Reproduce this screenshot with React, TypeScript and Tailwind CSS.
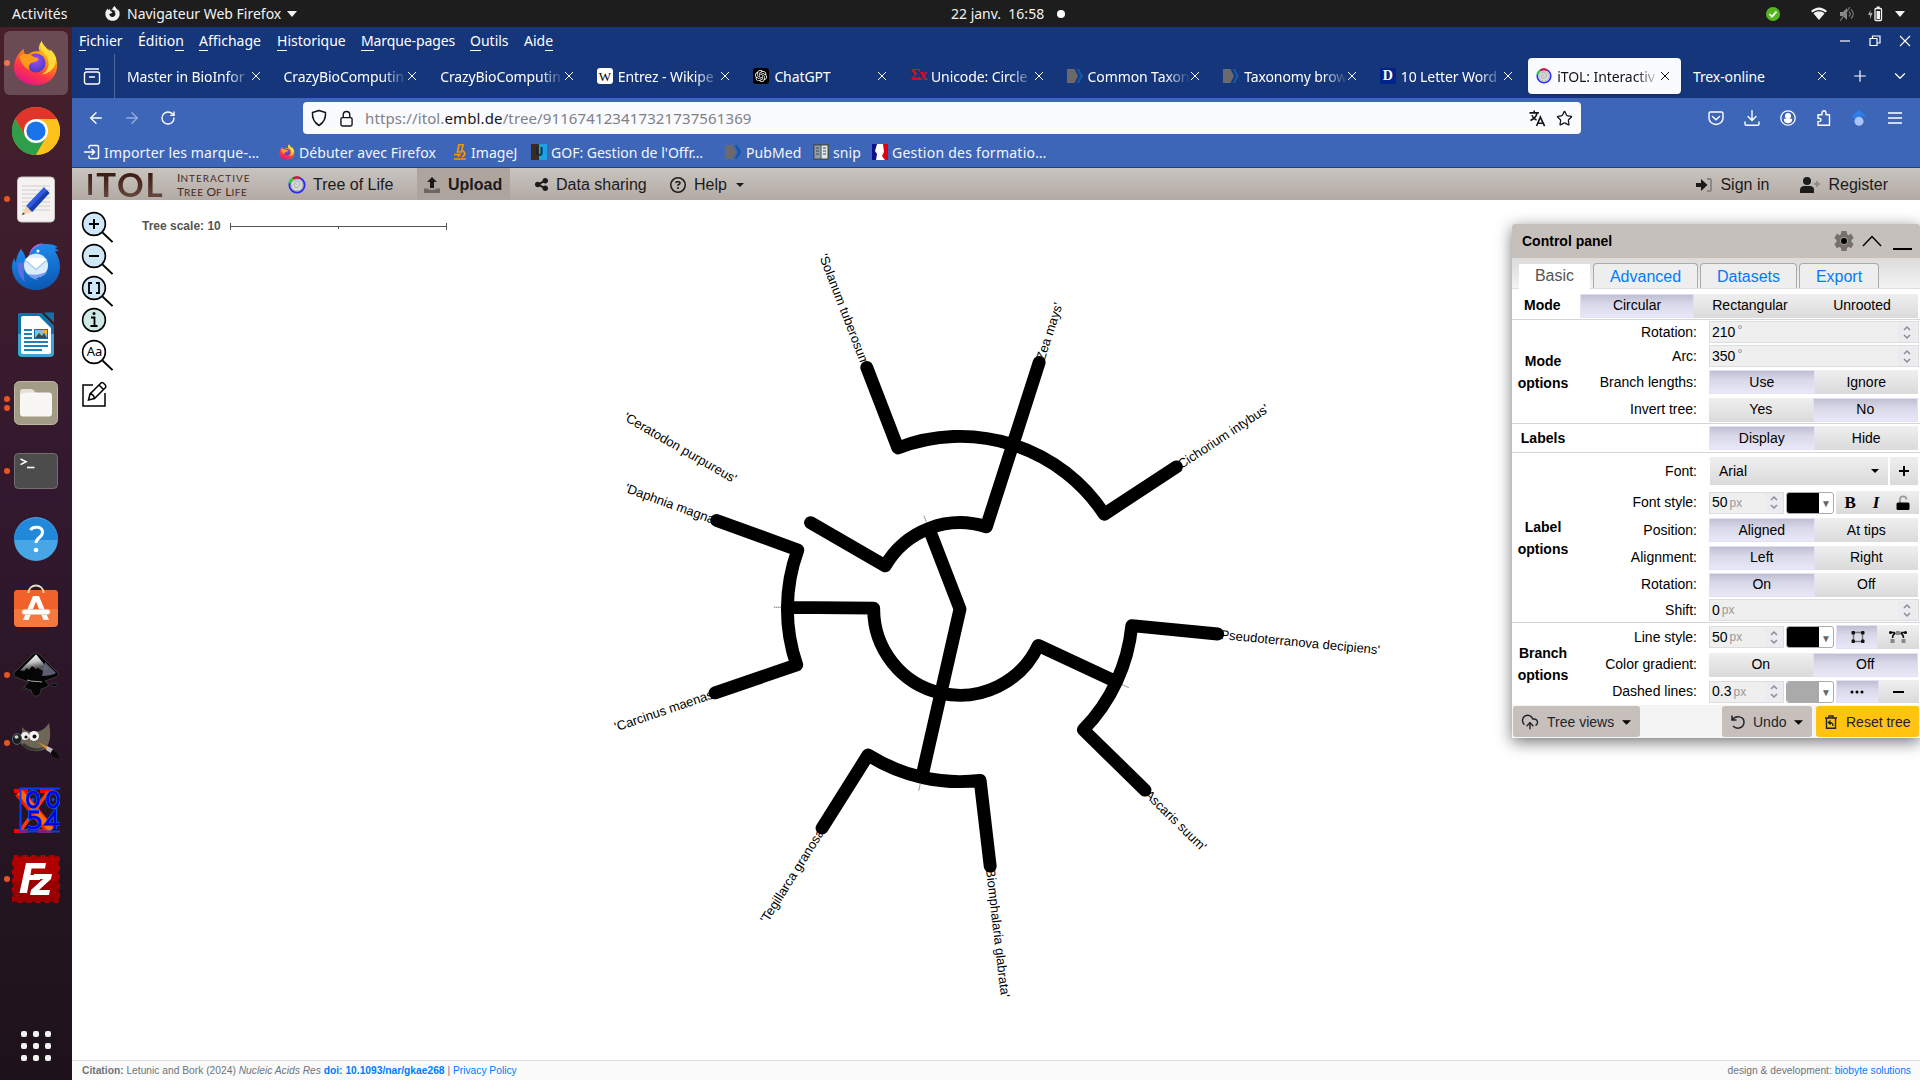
import React from 'react';
import { ArrowLeft, ArrowRight, RotateCw, Star, Plus, ChevronDown, CloudUpload } from 'lucide-react';
import { SiOpenai } from 'react-icons/si';
import { FaFirefoxBrowser, FaShareNodes, FaRegCircleQuestion, FaUser } from 'react-icons/fa6';

const UI = "font-['Noto_Sans',sans-serif]";
const SANS = "font-['Liberation_Sans',Arial,sans-serif]";

/* ---------- dock icons ---------- */

function FirefoxIcon({ className }: { className: string }) {
  return (
    <svg viewBox="0 0 48 48" className={className}>
      <defs>
        <linearGradient id="ffBody" x1="0.8" y1="0" x2="0.3" y2="1">
          <stop offset="0" stopColor="#fff44f" />
          <stop offset="0.35" stopColor="#ff980e" />
          <stop offset="0.7" stopColor="#ff3647" />
          <stop offset="1" stopColor="#e31587" />
        </linearGradient>
        <radialGradient id="ffCore" cx="0.5" cy="0.35" r="0.6">
          <stop offset="0" stopColor="#a24cff" />
          <stop offset="1" stopColor="#4b3fc0" />
        </radialGradient>
      </defs>
      <path d="M30 1c-3 4-4 8-2 11-6-1-11 1-13 4-3-1-4-4-4-7-6 5-10 12-10 20 0 10 10 18 23 18s22-9 22-21c0-7-3-13-7-16 0 2-1 3-2 4C36 7 31 6 30 1z" fill="url(#ffBody)" />
      <circle cx="24" cy="24" r="10" fill="url(#ffCore)" />
      <path d="M7 16c5-2 11-2 15 2 3 0 4 1 5 2-2 3-6 3-8 4-3 2-3 5-1 8-6-3-11-9-11-16z" fill="#ff9a1c" />
      <path d="M30 1c-4 8 3 12 6 18 3 7 0 14-6 17 9-1 15-8 15-17-2-5-5-7-8-9-3-2-6-4-7-9z" fill="#ffe03d" opacity="0.9" />
    </svg>
  );
}

function ChromeIcon() {
  return (
    <svg viewBox="0 0 48 48" className="size-12">
      <circle cx="24" cy="24" r="24" fill="#fbbc05" />
      <path d="M24 0A24 24 0 0 0 3.2 12L13.6 30 24 12H44.8A24 24 0 0 0 24 0z" fill="#e0352b" />
      <path d="M3.2 12A24 24 0 0 0 24 48L34.4 30H13.6z" fill="#2e9e4b" />
      <path d="M24 48A24 24 0 0 0 44.8 12H24L34.4 30z" fill="#fcc21b" />
      <circle cx="24" cy="24" r="12" fill="#fff" />
      <circle cx="24" cy="24" r="9.6" fill="#1a73e8" />
    </svg>
  );
}

function EditorIcon() {
  return (
    <svg viewBox="0 0 48 48" className="size-12">
      <rect x="5.5" y="2" width="37" height="45" rx="4" fill="#f4f3f2" stroke="#c9c5c2" />
      <path d="M10 11h28M10 15h28M10 19h28M10 23h28M10 27h28M10 31h28M10 35h28" stroke="#d0cecc" />
      <path d="M32 12l5 6-17 19-6-6z" fill="#2f5be0" />
      <path d="M35 15l2.500 3-17.500 19-3-3z" fill="#1c3fae" />
      <path d="M14 31l6 6-10 3z" fill="#f6d3b0" />
      <path d="M11 37.500l2 1.500-3 1z" fill="#333" />
    </svg>
  );
}

function ThunderbirdIcon() {
  return (
    <svg viewBox="0 0 48 48" className="size-12">
      <defs>
        <linearGradient id="tb" x1="0.4" y1="0" x2="0.6" y2="1">
          <stop offset="0" stopColor="#1f8df0" />
          <stop offset="1" stopColor="#0b57b4" />
        </linearGradient>
      </defs>
      <path d="M9 6c3 4 5 8 5 12l3-4C19 6 26 1 34 1c5 0 9 1 12 3l-3 1 4 3-4 0c3 5 5 10 5 16 0 13-11 23-24 23S0 37 0 24c0-3 1-6 2-9l2 5C4 15 6 10 9 6z" fill="url(#tb)" />
      <path d="M17 14C19 6 26 2 33 1c-6-2-14 2-16 11z" fill="#a06be8" />
      <path d="M6 20c-1 7 1 14 7 19-2-7-2-13 1-20z" fill="#6a6fe6" opacity="0.8" />
      <circle cx="24" cy="22.500" r="12" fill="#d9edfd" />
      <path d="M13 17c2-3 20-3 22 0L24 26z" fill="#fff" />
      <path d="M13 17l11 9.500L35 17" fill="none" stroke="#a9cdee" strokeWidth="1.500" />
      <path d="M16 31c2 3.500 6 5.500 10 5.500l-3-2c5 0 10-2 12-6-5 3-12 4-19 2.500z" fill="#7f9cf2" />
      <circle cx="26" cy="8" r="1.500" fill="#fff" />
    </svg>
  );
}

function WriterIcon() {
  return (
    <svg viewBox="0 0 48 48" className="size-12">
      <path d="M9 2h20l13 13v27a4 4 0 0 1-4 4H10a4 4 0 0 1-4-4V5a3 3 0 0 1 3-3z" fill="#3fa3d4" />
      <path d="M9 2h20l13 13v8H6V5a3 3 0 0 1 3-3z" fill="#1471a5" />
      <path d="M11 5h16l12 12v24a2 2 0 0 1-2 2H11a2 2 0 0 1-2-2V7a2 2 0 0 1 2-2z" fill="#fff" />
      <path d="M32 1.500h10v10z" fill="#1471a5" />
      <path d="M12 19h8M12 23h8M12 27h8M12 31h24M12 35h24M12 39h18" stroke="#1b7fc0" strokeWidth="2" />
      <rect x="22.500" y="18.500" width="13" height="9" fill="#7cc0ea" stroke="#1471a5" />
      <path d="M23 27l4-5 3 3 2-3 3 5z" fill="#444" />
      <rect x="32" y="19" width="3" height="3" fill="#fbb917" />
    </svg>
  );
}

function FilesIcon() {
  return (
    <svg viewBox="0 0 48 48" className="size-12">
      <rect x="2.500" y="2.500" width="43" height="43" rx="5" fill="#a29b86" stroke="#bdb7a3" />
      <path d="M8 13a3 3 0 0 1 3-3h9l4 4h13v8H8z" fill="#e4e0d6" />
      <rect x="8" y="13.500" width="32" height="24" rx="3" fill="#f8f7f5" />
      <path d="M8 15a2 2 0 0 1 2-2h11l2.500-2" fill="#e4e0d6" />
    </svg>
  );
}

function TerminalIcon() {
  return (
    <svg viewBox="0 0 48 48" className="size-12">
      <rect x="2.500" y="6.500" width="43" height="35" rx="4" fill="#4c4c4c" stroke="#707070" />
      <path d="M8.500 12l5.500 2.800-5.500 2.800" fill="none" stroke="#fff" strokeWidth="1.600" />
      <path d="M15 20.500h7.500" stroke="#fff" strokeWidth="1.600" />
    </svg>
  );
}

function HelpIcon() {
  return (
    <svg viewBox="0 0 48 48" className="size-12">
      <circle cx="24" cy="24" r="22" fill="#47a6e6" />
      <path d="M2 25A22 22 0 0 1 46 25z" fill="#2288da" />
      <path d="M18.500 15c2-3.500 12-4.500 12 2.500 0 5-6.500 5-6.500 10.500" fill="none" stroke="#fff" strokeWidth="3" />
      <circle cx="24" cy="35" r="2.300" fill="#fff" />
    </svg>
  );
}

function StoreIcon() {
  return (
    <svg viewBox="0 0 48 48" className="size-12">
      <rect x="2" y="7" width="44" height="37" rx="4" fill="#f5793f" />
      <path d="M2 26V11a4 4 0 0 1 4-4h36a4 4 0 0 1 4 4v15z" fill="#f1622a" />
      <path d="M16.500 10c0-10 15-10 15 0" fill="none" stroke="#f7dcae" strokeWidth="1.800" />
      <path d="M21 13h6l10 24h-5.500L24 18.500 16.500 37H11z" fill="#fff" />
      <rect x="10" y="26.500" width="28" height="5" rx="2.500" fill="#fff" stroke="#e9b9a0" strokeWidth="0.700" />
    </svg>
  );
}

function InkscapeIcon() {
  return (
    <svg viewBox="0 0 48 48" className="size-12">
      <defs>
        <linearGradient id="ink" x1="0.3" y1="0" x2="0.6" y2="0.9">
          <stop offset="0" stopColor="#fafafa" />
          <stop offset="0.5" stopColor="#c8c8c8" />
          <stop offset="0.9" stopColor="#555" />
        </linearGradient>
      </defs>
      <path d="M24 2c1.500 0 3 .8 4 2l17 17c2 2 1 4-1 5l-11 4c2 2 4 3 3 5-2 2-5 2-7 3 0 3-1 7-5 7s-4-4-5-6c-3 0-6-2-6-4 1-2 4-3 3-4L4 26c-2-1-3-3-1-5L20 4c1-1.200 2.500-2 4-2z" fill="#050505" stroke="#555" strokeWidth="0.600" />
      <path d="M24 3.500L8 19.500l4 .5 3-3 2 2 3-4 4 3 2-1 5 3 5-2-9-11c-1-1.500-2-3-3-3.500z" fill="url(#ink)" />
      <path d="M30 25c6 0 11-1 14-3L33 11z" fill="#6c6e85" opacity="0.85" />
      <path d="M15 29c5 2 11 1 15 2" stroke="#aaa" fill="none" />
      <ellipse cx="42" cy="34" rx="3" ry="1.500" fill="#050505" stroke="#555" strokeWidth="0.500" />
      <ellipse cx="12" cy="38" rx="2" ry="1" fill="#050505" stroke="#555" strokeWidth="0.500" />
    </svg>
  );
}

function GimpIcon() {
  return (
    <svg viewBox="0 0 48 48" className="size-12">
      <path d="M10 8c3 4 7 5 11 5 8 0 13-4 16-9 2 10 2 20-4 26-7 4-20 3-25-7 2-4 3-9 2-15z" fill="#6c6558" />
      <path d="M12 24c6 6 16 7 22 3-5 6-18 7-24-1z" fill="#3a352c" />
      <circle cx="13" cy="17" r="4" fill="#eee" />
      <circle cx="22" cy="17" r="5" fill="#f4f4f4" />
      <circle cx="14" cy="18" r="1.600" fill="#111" />
      <circle cx="22.500" cy="17.500" r="2" fill="#111" />
      <ellipse cx="5" cy="20" rx="4.600" ry="5.400" fill="#1a1d1d" stroke="#5a6666" />
      <ellipse cx="4.500" cy="18" rx="2" ry="1.700" fill="#c9d6d6" />
      <path d="M26 23l10 5-1 3z" fill="#e28a1e" />
      <path d="M35 27l6 3-2 4-5-3z" fill="#bbb" />
      <path d="M40 31c3 1 7 4 7 9-3-1-7-2-8-6z" fill="#0a0a0a" />
    </svg>
  );
}

function XtermIcon() {
  return (
    <svg viewBox="0 0 48 48" className="size-12">
      <path d="M2 4h14M28 4h14M2 44h14M26 44h14" stroke="#f00" strokeWidth="4" />
      <path d="M7 5l31 38" stroke="#f21b00" strokeWidth="10" />
      <path d="M8 5l31 38" stroke="#ff6a00" strokeWidth="6" />
      <path d="M36 5L9 43" stroke="#ff3a00" strokeWidth="3.500" />
      <path d="M48 1.500H8.500v43H48" fill="none" stroke="#0a3cff" strokeWidth="2" />
      <g fill="none" stroke="#0b8cff" strokeWidth="3.800">
        <ellipse cx="21" cy="12.500" rx="5.500" ry="7.500" />
        <ellipse cx="41" cy="12.500" rx="5.500" ry="7.500" />
        <path d="M27 25h-9v6c5-2 10 0 10 5s-6 6-12 4M43 42V25l-9 12h14" />
      </g>
      <g fill="none" stroke="#0000e6" strokeWidth="2.800">
        <ellipse cx="21" cy="12.500" rx="5.500" ry="7.500" />
        <ellipse cx="41" cy="12.500" rx="5.500" ry="7.500" />
        <path d="M27 25h-9v6c5-2 10 0 10 5s-6 6-12 4M43 42V25l-9 12h14" />
      </g>
      <circle cx="21" cy="12.500" r="1.500" fill="#0b4cff" />
      <circle cx="41" cy="12.500" r="1.500" fill="#0b4cff" />
    </svg>
  );
}

function FileZillaIcon() {
  return (
    <svg viewBox="0 0 48 48" className="size-12">
      <rect x="1.500" y="1.500" width="45" height="45" fill="#b00000" />
      <rect x="1.500" y="1.500" width="45" height="45" fill="none" stroke="#b00000" strokeWidth="3" strokeDasharray="5 4" />
      <path d="M1.500 26h45v20.500h-45z" fill="#980000" />
      <path d="M14 8h20l-1 5.500H19.500L18.500 20H29l-1 5H17.500L15 38H7.500z" fill="#fff" />
      <path d="M22 19h18l-1 5-12 11h11l-1 5H18l1-5 12-11h-9z" fill="#fff" />
    </svg>
  );
}

const dock: { icon: React.ReactNode; dots: number; active?: boolean }[] = [
  { icon: <FirefoxIcon className="size-[46px]" />, dots: 1, active: true },
  { icon: <ChromeIcon />, dots: 0 },
  { icon: <EditorIcon />, dots: 1 },
  { icon: <ThunderbirdIcon />, dots: 0 },
  { icon: <WriterIcon />, dots: 0 },
  { icon: <FilesIcon />, dots: 2 },
  { icon: <TerminalIcon />, dots: 1 },
  { icon: <HelpIcon />, dots: 0 },
  { icon: <StoreIcon />, dots: 0 },
  { icon: <InkscapeIcon />, dots: 1 },
  { icon: <GimpIcon />, dots: 1 },
  { icon: <XtermIcon />, dots: 0 },
  { icon: <FileZillaIcon />, dots: 1 },
];

function Dock() {
  return (
    <aside className="flex h-[1053px] w-[72px] shrink-0 flex-col bg-linear-to-b from-[#47202a] via-[#32182e] via-45% to-[#1d121b] pt-0.5">
      {dock.map((d, i) => (
        <div key={i} className="flex h-17 items-center">
          <div className="flex w-1 flex-col gap-[3px] pl-1">
            {Array.from({ length: d.dots }).map((_, k) => (
              <span key={k} className="size-1.5 rounded-full bg-[#e95420]" />
            ))}
          </div>
          <div className={d.active ? 'flex size-16 items-center justify-center rounded-md bg-white/20' : 'flex size-16 items-center justify-center'}>{d.icon}</div>
        </div>
      ))}
      <div className="mx-auto mt-auto mb-[19px] grid grid-cols-3 gap-1.5">
        {Array.from({ length: 9 }).map((_, k) => (
          <span key={k} className="size-1.5 rounded-[2px] bg-[#f2f2f0]" />
        ))}
      </div>
    </aside>
  );
}

/* ---------- top bar ---------- */

function TopBar() {
  return (
    <header className={`flex h-[27px] items-center bg-[#1d1d1d] text-[14px] whitespace-nowrap text-[#f2f2f2] ${UI}`}>
      <span className="w-[93px] pl-3 tracking-[0.1px]">Activités</span>
      <span className="flex w-[12px] grow basis-0 items-center pl-3">
        <FaFirefoxBrowser className="size-[15px]" />
        <span className="ml-[7px]">Navigateur Web Firefox</span>
        <svg viewBox="0 0 10 6" className="ml-1.5 h-1.5 w-2.5"><path d="M0 0h10L5 6z" fill="#f2f2f2" /></svg>
      </span>
      <span className="w-[106px] whitespace-pre">22 janv.  16:58</span>
      <span className="size-2 rounded-full bg-white" />
      <span className="flex grow basis-0 items-center justify-end pr-[9px]">
        <svg viewBox="0 0 14 14" className="mr-[31px] size-3.5">
          <circle cx="7" cy="7" r="7" fill="#52b71f" />
          <path d="M3.500 7.200l2.500 2.500 4.500-5" stroke="#fff" strokeWidth="1.800" fill="none" />
        </svg>
        <svg viewBox="0 0 16 14" className="mr-3 h-3.5 w-4">
          <path d="M0 4C5-.8 11-.8 16 4l-1.500 1.600C10.500 2 5.500 2 1.500 5.600z" fill="#f2f2f2" />
          <path d="M2.500 6.500c3-3 8-3 11 0L8 13z" fill="#f2f2f2" />
        </svg>
        <svg viewBox="0 0 16 14" className="mr-3 h-3.5 w-4">
          <path d="M1 5h3l4-4v12l-4-4H1z" fill="#8a8a8a" />
          <path d="M10 4.500c1.500 1.500 1.500 3.500 0 5M12 2.500c3 2.500 3 6.500 0 9M1 14L11 0" stroke="#777" fill="none" strokeWidth="1.200" />
        </svg>
        <svg viewBox="0 0 16 16" className="mr-3 size-4">
          <path d="M3.500 4L1 9h2v4l2.500-6h-2z" fill="#aaa" />
          <rect x="8" y="2.500" width="6.500" height="12" rx="1" fill="none" stroke="#f2f2f2" strokeWidth="1.300" />
          <rect x="9.700" y="0.500" width="3" height="2" fill="#f2f2f2" />
          <rect x="9.500" y="5" width="3.500" height="8" fill="#f2f2f2" />
        </svg>
        <svg viewBox="0 0 10 6" className="mr-1.5 h-1.5 w-2.5"><path d="M0 0h10L5 6z" fill="#f2f2f2" /></svg>
      </span>
    </header>
  );
}

/* ---------- browser chrome ---------- */

function U({ children }: { children: string }) {
  return <span className="border-b border-white">{children}</span>;
}

function MenuBar() {
  return (
    <div className="flex h-[27px] items-center pl-[7px] text-[14px] leading-[17px] text-white">
      <span className="w-[59px]"><U>F</U>ichier</span>
      <span className="w-[61px]">Éditio<U>n</U></span>
      <span className="w-[78px]"><U>A</U>ffichage</span>
      <span className="w-[84px]"><U>H</U>istorique</span>
      <span className="w-[109px] tracking-[-0.1px]"><U>M</U>arque-pages</span>
      <span className="w-[54px]"><U>O</U>utils</span>
      <span>Aid<U>e</U></span>
      <span className="ml-auto flex items-center gap-[18px] pr-[9px] text-white">
        <svg viewBox="0 0 12 12" className="size-3"><path d="M1 6h10" stroke="#fff" strokeWidth="1.200" /></svg>
        <svg viewBox="0 0 12 12" className="size-3"><path d="M1 3.500h7v7H1zM3.500 3V1H11v7H8.500" fill="none" stroke="#fff" strokeWidth="1.200" /></svg>
        <svg viewBox="0 0 12 12" className="size-3"><path d="M1 1l10 10M11 1L1 11" stroke="#fff" strokeWidth="1.100" /></svg>
      </span>
    </div>
  );
}

function ItolRing({ className }: { className: string }) {
  return (
    <svg viewBox="0 0 20 20" className={className}>
      <circle cx="10" cy="10" r="6.500" fill="#d8d8d8" stroke="#a8a8a8" strokeWidth="0.800" />
      <path d="M7 6c3-2 7 1 6 4s-5 4-6 1 2-4 3-1" fill="none" stroke="#999" strokeWidth="0.800" />
      <circle cx="10" cy="10" r="8.500" fill="none" stroke="#2a2af5" strokeWidth="2" />
      <path d="M1.700 8A8.500 8.500 0 0 1 5.500 2.800" fill="none" stroke="#18d838" strokeWidth="2.400" />
      <path d="M5.500 2.800A8.500 8.500 0 0 1 13.500 2.300" fill="none" stroke="#e01030" strokeWidth="2.400" />
    </svg>
  );
}

function NcbiIcon() {
  return (
    <svg viewBox="0 0 16 16" className="size-4">
      <path d="M0 1h7.500L11 8l-3.500 7H0z" fill="#6a6a6c" />
      <path d="M9.500 1h2.500L16 8l-4 7H9.500L13 8z" fill="#1457a5" />
    </svg>
  );
}

const WikiIcon = () => (
  <span className="flex size-4 items-center justify-center rounded-[3px] bg-white font-['Liberation_Serif',serif] text-[13px] leading-none tracking-tight text-black">W</span>
);
const GptIcon = () => (
  <span className="flex size-4 items-center justify-center rounded-[3px] bg-black"><SiOpenai className="size-3 text-white" /></span>
);
const SigmaIcon = () => (
  <span className="w-4 pb-[3px] font-['Liberation_Serif',serif] text-[16px] leading-none font-bold tracking-[-1.5px] text-[#e3061b]">Σx</span>
);
const DictIcon = () => (
  <span className="flex size-4 items-center justify-center bg-[#00248b] font-['Liberation_Serif',serif] text-[14px] leading-none font-bold text-white">D</span>
);

const tabs: { icon?: React.ReactNode; title: string; active?: boolean; fade?: boolean }[] = [
  { title: 'Master in BioInfor', fade: true },
  { title: 'CrazyBioComputin', fade: true },
  { title: 'CrazyBioComputin', fade: true },
  { icon: <WikiIcon />, title: 'Entrez - Wikipe', fade: true },
  { icon: <GptIcon />, title: 'ChatGPT' },
  { icon: <SigmaIcon />, title: 'Unicode: Circle', fade: true },
  { icon: <NcbiIcon />, title: 'Common Taxon', fade: true },
  { icon: <NcbiIcon />, title: 'Taxonomy brow', fade: true },
  { icon: <DictIcon />, title: '10 Letter Word', fade: true },
  { icon: <ItolRing className="size-4" />, title: 'iTOL: Interactiv', active: true, fade: true },
  { title: 'Trex-online' },
];

function TabStrip() {
  return (
    <div className="flex h-[44px] items-center text-[14px] tracking-[-0.1px] text-white">
      <div className="flex h-full w-[43px] items-center border-r border-[#4c67a0] pl-[11px]">
        <svg viewBox="0 0 18 18" className="size-[18px]" fill="none" stroke="#fff" strokeWidth="1.400">
          <path d="M2.500 2h13" strokeLinecap="round" />
          <rect x="1.500" y="5" width="15" height="12" rx="2" />
          <path d="M6.500 10h5" strokeLinecap="round" />
        </svg>
      </div>
      <div className="flex pl-[2px]">
        {tabs.map((t, i) => (
          <div key={i} className="w-[156.600px] px-0.5">
            <div className={t.active ? 'flex h-9 items-center rounded bg-[#fafbff] pr-[9px] pl-2 text-[#15141a] shadow' : 'flex h-9 items-center pr-[9px] pl-2'}>
              {t.icon && <span className="mr-[5px] flex shrink-0">{t.icon}</span>}
              <span className={t.fade ? 'min-w-0 grow basis-0 overflow-hidden [mask-image:linear-gradient(to_left,transparent,black_24px)] whitespace-nowrap' : 'min-w-0 grow basis-0 overflow-hidden whitespace-nowrap'}>{t.title}</span>
              <svg viewBox="0 0 10 10" className="mr-0.5 size-[10px] shrink-0"><path d="M1 1l8 8M9 1L1 9" stroke="currentColor" strokeWidth="1" /></svg>
            </div>
          </div>
        ))}
      </div>
      <Plus className="ml-[11px] size-[18px]" strokeWidth={1.6} />
      <ChevronDown className="ml-[22px] size-[18px]" strokeWidth={1.6} />
    </div>
  );
}

function TranslateIcon() {
  return (
    <svg viewBox="0 0 18 18" className="size-[17px]" fill="none" stroke="#15141a" strokeWidth="1.700">
      <path d="M0.500 3h10M5.500 0.500V3M8.500 3C8 6.500 5 9.500 1.500 11M3 5.500C4 8 5.500 9.500 8 10.500" />
      <path d="M8 17l4-9.500L16.500 17M9.500 14h5.500" />
    </svg>
  );
}

function NavBar() {
  return (
    <div className="flex h-[40px] items-center text-white">
      <ArrowLeft className="ml-[15px] size-[18px]" strokeWidth={1.8} />
      <ArrowRight className="ml-[18px] size-[18px] opacity-45" strokeWidth={1.8} />
      <RotateCw className="ml-[19px] size-[16px]" strokeWidth={2} />
      <div className="ml-[127px] flex h-8 w-[1278px] items-center rounded bg-[#fafbff] pl-2 text-[#15141a]">
        <svg viewBox="0 0 16 18" className="h-[18px] w-4" fill="none" stroke="#15141a" strokeWidth="1.500"><path d="M8 1.500l6.500 2C15 10 12 14 8 16.500 4 14 1 10 1.500 3.500z" strokeLinejoin="round" /></svg>
        <svg viewBox="0 0 14 18" className="ml-[13px] h-[17px] w-[13px]" fill="none" stroke="#15141a" strokeWidth="1.500"><rect x="1" y="8" width="12" height="9" rx="1.500" /><path d="M3.500 8V5a3.500 3.500 0 0 1 7 0v3" /></svg>
        <span className="ml-3 text-[15px] tracking-[0.12px] text-[#7f8087]">https://itol.<span className="text-[#15141a]">embl.de</span>/tree/911674123417321737561369</span>
        <span className="ml-auto"><TranslateIcon /></span>
        <Star className="mr-2 ml-[10px] size-[17px]" strokeWidth={1.8} />
      </div>
      <svg viewBox="0 0 16 16" className="ml-[127px] size-4" fill="none" stroke="#fff" strokeWidth="1.400"><path d="M1 3.500A1.500 1.500 0 0 1 2.500 2h11A1.500 1.500 0 0 1 15 3.500V8a7 6.500 0 0 1-14 0z" /><path d="M4.500 6.500L8 9.800l3.500-3.300" strokeLinecap="round" /></svg>
      <svg viewBox="0 0 16 16" className="ml-[20px] size-4" fill="none" stroke="#fff" strokeWidth="1.400" strokeLinecap="round"><path d="M8 .8v9.500M4 6.500l4 4 4-4M1 12v2a1.200 1.200 0 0 0 1.200 1.200h11.600A1.200 1.200 0 0 0 15 14v-2" /></svg>
      <svg viewBox="0 0 16 16" className="ml-[20px] size-4" fill="none" stroke="#fff" strokeWidth="1.300"><circle cx="8" cy="8" r="7.200" /><circle cx="8" cy="6" r="2.400" fill="#fff" /><path d="M4.500 9.500h7c0 4-7 4-7 0z" fill="#fff" /></svg>
      <svg viewBox="0 0 16 16" className="ml-[20px] size-4" fill="none" stroke="#fff" strokeWidth="1.400"><path d="M2 15.200v-3.700c4 .8 4-4 0-3.200V4.700h4V3c0-3 4-3 4 0v1.700h3.500v10.500z" strokeLinejoin="round" /></svg>
      <svg viewBox="0 0 16 18" className="ml-[19px] h-[17px] w-4"><path d="M8 0L0 7l4 3 4-3 8 0z" fill="#2f7de9" /><circle cx="8" cy="12" r="4.800" fill="#a9c6fb" /></svg>
      <svg viewBox="0 0 14 12" className="ml-[21px] h-3 w-3.5"><path d="M0 1h14M0 6h14M0 11h14" stroke="#fff" strokeWidth="1.300" /></svg>
    </div>
  );
}

function Bookmarks() {
  return (
    <div className="flex h-[29px] items-center pb-px text-[14px] tracking-[0.06px] whitespace-nowrap text-[#f4f6fb]">
      <svg viewBox="0 0 16 16" className="ml-[12px] size-4" fill="none" stroke="#fff" strokeWidth="1.500"><path d="M5 4.500V3a1.500 1.500 0 0 1 1.500-1.500H13A1.500 1.500 0 0 1 14.500 3v10a1.500 1.500 0 0 1-1.500 1.500H6.500A1.500 1.500 0 0 1 5 13v-1.500M0 8h10.500M7.500 5l3 3-3 3" /></svg>
      <span className="ml-1 w-[175px] tracking-[0.15px]">Importer les marque-…</span>
      <FirefoxIcon className="size-4" />
      <span className="ml-1 w-[154px]">Débuter avec Firefox</span>
      <svg viewBox="0 0 14 16" className="h-4 w-3.5"><path d="M6 .5h4L8.500 8H4.500zM10 6.500c3 3 2 5-1 6.500M1 10.500h7M5.500 10.500V13M1 15h12" fill="none" stroke="#f09a08" strokeWidth="1.700" /></svg>
      <span className="ml-[4px] w-[60px]">ImageJ</span>
      <span className="flex size-4 items-center justify-center bg-linear-to-r from-[#3a2a22] from-50% to-[#1aa3e0] to-50% text-[12px] leading-none font-bold text-[#0c2a3c]">U</span>
      <span className="ml-1 w-[174px] tracking-[0px]">GOF: Gestion de l'Offr…</span>
      <NcbiIcon />
      <span className="ml-[5px] w-[67px]">PubMed</span>
      <svg viewBox="0 0 16 16" className="size-4"><rect width="16" height="16" fill="#454f55" /><rect x="1.500" y="1.500" width="6" height="13" fill="#8fa0aa" /><rect x="8.500" y="1.500" width="6" height="13" fill="#dfe6ea" /><path d="M3 4h3M3 7h3M3 10h3M10 4h3M10 7h3M10 10h3" stroke="#39444b" /></svg>
      <span className="ml-1 w-[39px]">snip</span>
      <svg viewBox="0 0 16 16" className="size-4"><rect width="16" height="16" fill="#fff" /><path d="M0 0h5L3 7l2 3-1 6H0z" fill="#10108a" /><path d="M11 0h5v16h-3l-3-4 2-4z" fill="#e1000f" /></svg>
      <span className="ml-1 tracking-[0.25px]">Gestion des formatio…</span>
    </div>
  );
}

/* ---------- site header ---------- */

function SiteHeader() {
  return (
    <div className={`flex h-8 shrink-0 items-center bg-linear-to-b from-[#c9c4c0] to-[#b3aaa4] pt-px text-[16px] text-[#1b1b1b] ${SANS}`}>
      <div className="ml-[14px] flex h-8 w-[91px] items-end bg-linear-to-b from-[#35130c] to-[#6b4f45] bg-clip-text pb-px font-['Lato',sans-serif] text-[33px] leading-[32px] font-bold text-transparent">
        <span className="mr-0.5 text-[28px] leading-[31px]">I</span><span className="tracking-[1.8px]">TOL</span>
      </div>
      <div className="w-[111px] font-['Lato',sans-serif] text-[12px] leading-[14px] font-normal text-[#4a2a20]">
        <div>I<span className="text-[10px] tracking-[1px]">NTERACTIVE</span></div>
        <div>T<span className="text-[10px] tracking-[0.5px]">REE</span> O<span className="text-[10px] tracking-[0.5px]">F</span> L<span className="text-[10px] tracking-[0.5px]">IFE</span></div>
      </div>
      <ItolRing className="size-[18px]" />
      <span className="ml-[7px] w-[104px]">Tree of Life</span>
      <div className="-mt-px flex h-8 w-[93px] items-center bg-[#aea49e] pt-px pl-[7px]">
        <svg viewBox="0 0 16 16" className="size-4"><path d="M8 0l5 5h-3v6H6V5H3z" fill="#1b1b1b" /><path d="M0 11.500h4.500v1.200h7v-1.200H16V16H0z" fill="#6d6763" /></svg>
        <span className="ml-2 font-bold">Upload</span>
      </div>
      <FaShareNodes className="ml-[24px] size-[15px]" />
      <span className="ml-[7px] w-[114px]">Data sharing</span>
      <FaRegCircleQuestion className="size-4" />
      <span className="ml-2">Help</span>
      <svg viewBox="0 0 8 4" className="ml-[9px] h-1 w-2"><path d="M0 0h8L4 4z" fill="#1b1b1b" /></svg>
      <svg viewBox="0 0 16 14" className="ml-auto h-3.5 w-4"><path d="M0 5h5V1l6.500 6L5 13V9H0z" fill="#1b1b1b" /><path d="M11 1h3a1 1 0 0 1 1 1v10a1 1 0 0 1-1 1h-3" stroke="#8b837d" strokeWidth="1.800" fill="none" /></svg>
      <span className="ml-2 w-[80px]">Sign in</span>
      <svg viewBox="0 0 20 16" className="h-4 w-5"><circle cx="7" cy="4" r="4" fill="#1b1b1b" /><path d="M0 16v-3c0-3 2-4 4-4h6c2 0 4 1 4 4v3z" fill="#1b1b1b" /><path d="M14 7h6M17 4v6" stroke="#8b837d" strokeWidth="1.600" /></svg>
      <span className="ml-[8px] mr-8">Register</span>
    </div>
  );
}

/* ---------- tree ---------- */

const R = 86.3;
const DEG = Math.PI / 180;
const pt = (r: number, a: number) => `${(r * Math.cos(a * DEG)).toFixed(2)} ${(r * Math.sin(a * DEG)).toFixed(2)}`;
const arc = (r: number, a: number, b: number) => `M${pt(r, a)}A${r} ${r} 0 ${b - a > 180 ? 1 : 0} 1 ${pt(r, b)}`;
const line = (r1: number, r2: number, a: number) => `M${pt(r1, a)}L${pt(r2, a)}`;

const leaves = [
  { name: "'Ceratodon purpureus'", a: -150, from: R, to: 2 * R },
  { name: "'Solanum tuberosum'", a: -111.1, from: 2 * R, to: 3 * R },
  { name: "'Zea mays'", a: -72.2, from: 2 * R, to: 3 * R },
  { name: "'Cichorium intybus'", a: -33.3, from: 2 * R, to: 3 * R },
  { name: "'Pseudoterranova decipiens'", a: 5.55, from: 2 * R, to: 3 * R },
  { name: "'Ascaris suum'", a: 44.4, from: 2 * R, to: 3 * R },
  { name: "'Biomphalaria glabrata'", a: 83.3, from: 2 * R, to: 3 * R },
  { name: "'Tegillarca granosa'", a: 122.2, from: 2 * R, to: 3 * R },
  { name: "'Carcinus maenas'", a: 161.1, from: 2 * R, to: 3 * R },
  { name: "'Daphnia magna'", a: 200, from: 2 * R, to: 3 * R },
];

const branches = [
  ...leaves.map((l) => line(l.from, l.to, l.a)),
  line(0, R, -111.1),
  line(0, R, 102.8),
  arc(R, -150, -72.2),
  line(R, 2 * R, -72.2),
  arc(2 * R, -111.1, -33.3),
  arc(R, 25, 180.55),
  line(R, 2 * R, 25),
  line(R, 2 * R, 102.8),
  line(R, 2 * R, 180.55),
  arc(2 * R, 5.55, 44.4),
  arc(2 * R, 83.3, 122.2),
  arc(2 * R, 161.1, 200),
];

const nodeMarks = [
  [R, -111.1],
  [2 * R, 25],
  [2 * R, 102.8],
  [2 * R, 180.55],
];

function Tree() {
  return (
    <svg width="860" height="800" viewBox="-430 -400 860 800" className="absolute top-[8.500px] left-[458px]">
      <path d={branches.join('')} fill="none" stroke="#000" strokeWidth="12.900" strokeLinecap="round" strokeLinejoin="round" />
      <path d={line(2 * R + 6, 3 * R, -150)} stroke="#e8e8e8" strokeWidth="0.500" strokeDasharray="1 3" />
      {nodeMarks.map(([r, a]) => (
        <path key={a} d={line(r + 6, r + 14, a)} stroke="#777" strokeWidth="1" strokeDasharray="1.500 0.500" />
      ))}
      {leaves.map((l) => {
        const flip = l.a > 90 || l.a < -90;
        const r = 3 * R + (flip ? 0 : 0.5);
        return (
          <text
            key={l.name}
            transform={`rotate(${flip ? l.a + 180 : l.a})`}
            x={flip ? -r : r}
            y="4.600"
            textAnchor={flip ? 'end' : 'start'}
            className={`text-[13px] ${SANS}`}
          >
            {l.name}
          </text>
        );
      })}
    </svg>
  );
}

/* ---------- viewer tools ---------- */

function Lens({ children, fill, handle = true }: { children?: React.ReactNode; fill: string; handle?: boolean }) {
  return (
    <svg viewBox="0 0 32 32" className="size-8">
      <circle cx="13" cy="13" r="11.400" fill={fill} stroke="#000" strokeWidth="1.600" />
      {handle && <path d="M21.500 21.500L31.500 31" stroke="#000" strokeWidth="1.800" />}
      {children}
    </svg>
  );
}

function Tools() {
  return (
    <div className="absolute top-[11px] left-[9px] flex flex-col">
      <Lens fill="#cfe8f8"><path d="M8 13h10M13 8v10" stroke="#000" strokeWidth="2" /></Lens>
      <Lens fill="#cfe8f8"><path d="M8 13h10" stroke="#000" strokeWidth="2" /></Lens>
      <Lens fill="#cfe8f8"><path d="M11 8H8v10h3M15 8h3v10h-3" stroke="#000" strokeWidth="1.800" fill="none" /></Lens>
      <Lens fill="#cfeae4" handle={false}><path d="M10 10.500h3.500v8.500M9.500 19h7" stroke="#000" strokeWidth="1.800" fill="none" /><circle cx="13" cy="6.500" r="1.500" /></Lens>
      <Lens fill="#fff"><text x="13.500" y="17" textAnchor="middle" className="font-['Noto_Sans',sans-serif] text-[13px]">Aa</text></Lens>
      <svg viewBox="0 0 26 28" className="mt-[10px] ml-px h-[28px] w-[26px]" fill="none" stroke="#000" strokeWidth="1.500">
        <path d="M11 4H1v21h22V12" />
        <path d="M6.500 19l1.500-6L19 2c1.500-1.500 6 2.500 4.500 4.500L12.500 17.500zM8 13c2 0 4 2 4.500 4.500M17 4l4.500 4.500" />
      </svg>
    </div>
  );
}

/* ---------- control panel ---------- */

const ON = 'flex flex-1 items-center justify-center bg-linear-to-b from-[#bfbfd3] via-[#d8d8e8] via-40% to-[#e9e8f8] border border-[#e2e1f3]';
const OFF = 'flex flex-1 items-center justify-center bg-linear-to-b from-[#efefef] to-[#dadada]';

function Toggle({ options, on }: { options: string[]; on: number }) {
  return (
    <div className="flex h-6 w-[209px]">
      {options.map((o, i) => (
        <span key={o} className={i === on ? ON : OFF}>{o}</span>
      ))}
    </div>
  );
}

function Spin() {
  return (
    <svg viewBox="0 0 18 18" className="ml-auto h-[19px] w-[18px] bg-[#ebebf0]" fill="none" stroke="#8c8c94" strokeWidth="1.500">
      <path d="M6 6.500l3-3 3 3M6 11.500l3 3 3-3" />
    </svg>
  );
}

function NumberBox({ value, unit, wide }: { value: string; unit: string; wide?: boolean }) {
  return (
    <div className={wide ? 'flex h-[22px] w-[210px] items-center border border-[#dcdcdc] bg-[#efefef] pr-0.5 pl-0.5' : 'flex h-[22px] w-[75px] items-center border border-[#dcdcdc] bg-[#efefef] pl-0.5'}>
      {value}
      {unit === '°' ? <span className="ml-0.5 -mt-[5px] text-[13px] text-[#888]">°</span> : <span className="ml-0.5 text-[12px] text-[#999]">{unit}</span>}
      <Spin />
    </div>
  );
}

function Swatch({ grey }: { grey?: boolean }) {
  return (
    <div className="ml-0.5 flex h-[22px] w-12 overflow-hidden rounded-[3px] border border-[#aaa] bg-white">
      <span className={grey ? 'w-8 bg-[#aaa]' : 'w-8 bg-black'} />
      <span className="flex flex-1 items-center justify-center pt-0.5 text-[10px] text-[#666]">▼</span>
    </div>
  );
}

function Row({ label, h, children }: { label: string; h: string; children: React.ReactNode }) {
  return (
    <div className={`flex items-center justify-end pr-px ${h}`}>
      <span className="mr-3">{label}</span>
      <div className="flex w-[210px] items-center">{children}</div>
    </div>
  );
}

function Section({ title, children, last }: { title: string; children: React.ReactNode; last?: boolean }) {
  return (
    <div className={last ? 'flex' : 'flex border-b border-[#d5d5d8]'}>
      <div className="flex w-[62px] items-center justify-center text-center leading-[22px] font-bold">{title}</div>
      <div className="flex grow flex-col">{children}</div>
    </div>
  );
}

const TAB = 'flex h-[25px] items-center justify-center rounded-t border border-b-0 border-[#aaa] bg-[#eee] pt-px text-[#007bff]';

function ControlPanel() {
  return (
    <div className={`absolute top-6 right-0 flex h-[514px] w-[408px] flex-col rounded-t-[3px] bg-white text-[14px] text-black shadow-[0_4px_16px_rgba(0,0,0,0.55)] ${SANS}`}>
      <div className="flex h-[34px] items-center rounded-t-[3px] bg-[#c6c0bc] pl-[10px] font-bold">
        Control panel
        <svg viewBox="0 0 20 20" className="ml-auto size-5"><g fill="#77706c"><circle cx="10" cy="10" r="7.500" /><path d="M7.500 0h5l1 5h-7zM7.500 20h5l1-5h-7zM.4 7L3 2.500 7.500 6l-3 5zM19.600 7L17 2.500 12.500 6l3 5zM.4 13L3 17.500 7.500 14l-3-5zM19.600 13L17 17.500 12.500 14l3-5z" /></g><circle cx="10" cy="10" r="3.600" fill="#000" stroke="#bbb" strokeWidth="0.800" /></svg>
        <svg viewBox="0 0 20 12" className="ml-[8px] h-3 w-5"><path d="M1 11l9-9.500 9 9.500" fill="none" stroke="#000" strokeWidth="1.500" /></svg>
        <span className="mr-2 ml-[11px] h-0.5 w-[19px] translate-y-[8px] bg-black" />
      </div>
      <div className="flex h-[31px] items-end gap-0.5 border-b border-[#dcdee2] bg-linear-to-b from-[#dbdbdb] to-[#f3f3f5] pl-[7px] text-[16px]">
        <span className="-mb-px mr-px flex h-[25px] w-[71px] items-center justify-center bg-white pb-px text-[#555]">Basic</span>
        <span className={`w-[105px] ${TAB}`}>Advanced</span>
        <span className={`w-[97px] ${TAB}`}>Datasets</span>
        <span className={`w-[80px] ${TAB}`}>Export</span>
      </div>
      <div className="flex h-[31px] items-center border-b border-[#d5d5d8] pt-[3px] pr-[2px]">
        <span className="w-[68px] pl-3 font-bold">Mode</span>
        <div className="flex h-6 grow">
          <span className={ON}>Circular</span>
          <span className={OFF}>Rectangular</span>
          <span className={OFF}>Unrooted</span>
        </div>
      </div>
      <Section title="Mode options">
        <Row label="Rotation:" h="h-6"><NumberBox value="210" unit="°" wide /></Row>
        <Row label="Arc:" h="h-6"><NumberBox value="350" unit="°" wide /></Row>
        <Row label="Branch lengths:" h="h-[28px]"><Toggle options={['Use', 'Ignore']} on={0} /></Row>
        <Row label="Invert tree:" h="h-[27px]"><Toggle options={['Yes', 'No']} on={1} /></Row>
      </Section>
      <Section title="Labels">
        <Row label="" h="h-7"><Toggle options={['Display', 'Hide']} on={0} /></Row>
      </Section>
      <Section title="Label options">
        <Row label="Font:" h="h-9">
          <span className="ml-px flex h-7 w-[178px] items-center justify-between bg-linear-to-b from-[#efefef] to-[#dadada] px-[9px]">Arial<svg viewBox="0 0 8 4" className="h-1 w-2"><path d="M0 0h8L4 4z" /></svg></span>
          <span className="ml-0.5 flex h-7 w-7 items-center justify-center bg-linear-to-b from-[#efefef] to-[#dadada]"><svg viewBox="0 0 10 10" className="size-2.5"><path d="M0 5h10M5 0v10" stroke="#000" strokeWidth="2" /></svg></span>
        </Row>
        <Row label="Font style:" h="h-[27px]">
          <NumberBox value="50" unit="px" />
          <Swatch />
          <span className="ml-0.5 flex h-[23px] flex-1 items-center justify-around bg-linear-to-b from-[#efefef] to-[#dadada] text-[17px]">
            <span className="font-['Liberation_Serif',serif] font-bold">B</span>
            <span className="font-['Liberation_Serif',serif] font-bold italic">I</span>
            <svg viewBox="0 0 14 15" className="h-[15px] w-3.5"><path d="M4 8V4.500a3.200 3.200 0 0 1 6.400 0" fill="none" stroke="#999" strokeWidth="1.800" /><rect x="0.500" y="7.500" width="13" height="7.500" rx="1.500" /></svg>
          </span>
        </Row>
        <Row label="Position:" h="h-[28px]"><Toggle options={['Aligned', 'At tips']} on={0} /></Row>
        <Row label="Alignment:" h="h-[27px]"><Toggle options={['Left', 'Right']} on={0} /></Row>
        <Row label="Rotation:" h="h-[27px]"><Toggle options={['On', 'Off']} on={0} /></Row>
        <Row label="Shift:" h="h-[24px]"><NumberBox value="0" unit="px" wide /></Row>
      </Section>
      <Section title="Branch options" last>
        <Row label="Line style:" h="h-[28px]">
          <NumberBox value="50" unit="px" />
          <Swatch />
          <span className="ml-0.5 flex h-6 flex-1">
            <span className={`${ON} -mr-1`}>
              <svg viewBox="0 0 14 14" className="size-3.5"><path d="M2.500 2.500h9v9h-9z" fill="none" stroke="#777" strokeWidth="1.500" /><g fill="#111"><rect x="0.500" y="1" width="3.500" height="3.500" rx="1" /><rect x="10" y="1" width="3.500" height="3.500" rx="1" /><rect x="0.500" y="9.500" width="3.500" height="3.500" rx="1" /><rect x="10" y="9.500" width="3.500" height="3.500" rx="1" /></g></svg>
            </span>
            <span className={OFF}>
              <svg viewBox="0 0 18 14" className="h-3.5 w-[18px]"><g fill="#888"><rect x="7" y="1" width="4" height="4" /><rect x="1.500" y="9" width="4" height="4" /><rect x="12.500" y="9" width="4" height="4" /></g><path d="M1 2.500h5M12 2.500h5M3.500 8c0-3 1-4 3-5M14.500 8c0-3-1-4-3-5" fill="none" stroke="#111" strokeWidth="1.500" /><circle cx="1.500" cy="2.500" r="1.500" /><circle cx="16.500" cy="2.500" r="1.500" /></svg>
            </span>
          </span>
        </Row>
        <Row label="Color gradient:" h="h-[27px]"><Toggle options={['On', 'Off']} on={1} /></Row>
        <Row label="Dashed lines:" h="h-[27px]">
          <NumberBox value="0.3" unit="px" />
          <Swatch grey />
          <span className="ml-0.5 flex h-[23px] flex-1">
            <span className={ON}><svg viewBox="0 0 14 4" className="h-1 w-3.5"><circle cx="2" cy="2" r="1.500" /><circle cx="7" cy="2" r="1.500" /><circle cx="12" cy="2" r="1.500" /></svg></span>
            <span className={OFF}><span className="h-0.5 w-[11px] bg-black" /></span>
          </span>
        </Row>
      </Section>
      <div className="mt-auto flex h-[33px] items-center bg-[#f4f4f4] pr-px pl-px text-[#212529]">
        <span className="flex h-[31px] w-[127px] items-center rounded-[3px] bg-[#c6bfbb] pt-px pl-2">
          <CloudUpload className="size-[18px]" strokeWidth={1.9} />
          <span className="ml-2">Tree views</span>
          <svg viewBox="0 0 10 5" className="ml-2 h-[5px] w-[9px]"><path d="M0 0h10L5 5z" /></svg>
        </span>
        <span className="ml-auto flex h-[31px] w-[90px] items-center rounded-[3px] bg-[#c6bfbb] pt-px pl-[9px]">
          <svg viewBox="0 0 14 14" className="size-[14px]" fill="none" stroke="#212529" strokeWidth="1.500"><path d="M1 .5V5h4.500M1.300 5C4 0 13 1 13 7s-7 8-11 4" /></svg>
          <span className="ml-2">Undo</span>
          <svg viewBox="0 0 10 5" className="ml-2 h-[5px] w-[9px]"><path d="M0 0h10L5 5z" /></svg>
        </span>
        <span className="ml-1 flex h-[31px] w-[103px] items-center rounded-[3px] bg-[#ffc310] pt-px pl-[9px]">
          <svg viewBox="0 0 12 15" className="h-[15px] w-3" fill="none" stroke="#212529" strokeWidth="1.400"><path d="M0 3h12M1.500 3v10.200h9V3M4 3V1h4v2M8 11c0-3-1-3.500-4-3.500M5.500 5.500l-2 2 2 2" /></svg>
          <span className="ml-[9px]">Reset tree</span>
        </span>
      </div>
    </div>
  );
}

function TreeScale() {
  return (
    <div className={`absolute top-[18px] left-[70px] flex items-center text-[12px] leading-4 font-bold text-[#555] ${SANS}`}>
      <span className="w-[88px]">Tree scale: 10</span>
      <svg viewBox="0 0 217 7" className="h-[7px] w-[217px]"><path d="M.5 0v7M216.500 0v7M0 3.500h217M108.500 3.500V6" stroke="#555" strokeWidth="1" fill="none" /></svg>
    </div>
  );
}

export default function App() {
  return (
    <div className="h-[1080px] w-[1920px] overflow-hidden bg-white">
      <TopBar />
      <div className="flex">
        <Dock />
        <div className="flex h-[1053px] w-[1848px] flex-col">
          <div className={`bg-[#15367b] ${UI}`}>
            <MenuBar />
            <TabStrip />
          </div>
          <div className={`h-[70px] border-b border-[#1d4080] bg-[#3d66b8] ${UI}`}>
            <NavBar />
            <Bookmarks />
          </div>
          <SiteHeader />
          <main className="relative grow overflow-hidden bg-white">
            <Tools />
            <TreeScale />
            <Tree />
            <ControlPanel />
          </main>
          <footer className={`flex h-5 items-center justify-between border-t border-[#dcdcdc] bg-[#fafafa] pt-px pr-[9px] pl-[10px] text-[10.250px] text-[#6c757d] ${SANS}`}>
            <span><b>Citation:</b> Letunic and Bork (2024) <i>Nucleic Acids Res</i> <b className="text-[#007bff]">doi: 10.1093/nar/gkae268</b> | <span className="text-[#007bff]">Privacy Policy</span></span>
            <span>design &amp; development: <span className="text-[#007bff]">biobyte solutions</span></span>
          </footer>
        </div>
      </div>
    </div>
  );
}
